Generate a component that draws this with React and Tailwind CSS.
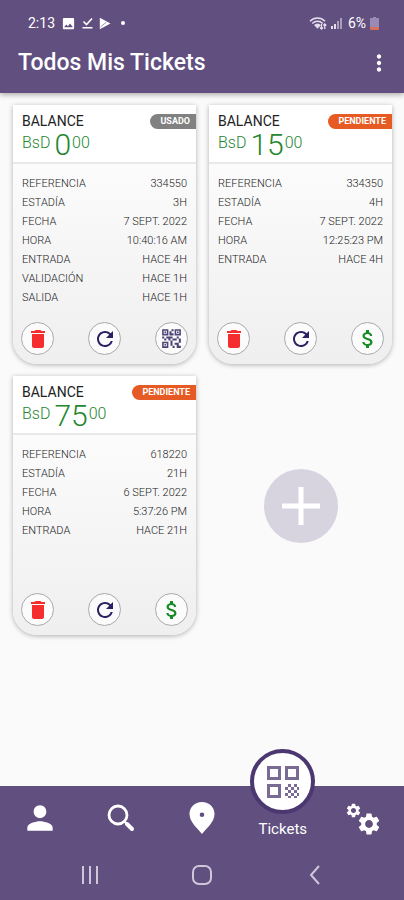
import {
  MdAttachMoney,
  MdDelete,
  MdImage,
  MdMoreVert,
  MdPerson,
  MdQrCode2,
  MdRefresh,
  MdSettings,
} from "react-icons/md";

const tickets = [
  {
    id: "334550",
    amount: "0",
    status: "USADO",
    rows: [
      ["REFERENCIA", "334550"],
      ["ESTADÍA", "3H"],
      ["FECHA", "7 SEPT. 2022"],
      ["HORA", "10:40:16 AM"],
      ["ENTRADA", "HACE 4H"],
      ["VALIDACIÓN", "HACE 1H"],
      ["SALIDA", "HACE 1H"],
    ],
  },
  {
    id: "334350",
    amount: "15",
    status: "PENDIENTE",
    rows: [
      ["REFERENCIA", "334350"],
      ["ESTADÍA", "4H"],
      ["FECHA", "7 SEPT. 2022"],
      ["HORA", "12:25:23 PM"],
      ["ENTRADA", "HACE 4H"],
    ],
  },
  {
    id: "618220",
    amount: "75",
    status: "PENDIENTE",
    rows: [
      ["REFERENCIA", "618220"],
      ["ESTADÍA", "21H"],
      ["FECHA", "6 SEPT. 2022"],
      ["HORA", "5:37:26 PM"],
      ["ENTRADA", "HACE 21H"],
    ],
  },
];

function StatusBar() {
  return (
    <div className="flex h-6 items-center justify-between pl-7 pr-[25px] text-sm">
      <div className="flex items-center gap-1.5">
        <span>2:13</span>
        <MdImage size={15} />
        <svg viewBox="0 0 11 12" width="11" height="12" fill="none" stroke="currentColor" strokeWidth="1.6">
          <path d="M1.5 4.5 4.5 7.5 10 1.5M.5 10.8h10" />
        </svg>
        <svg viewBox="0 0 12 13" width="12" height="13">
          <path fill="currentColor" d="M.8.8v11.4L11.5 6.5z" />
          <path fill="none" stroke="#614f7f" strokeWidth=".6" d="m1.5 10 6-5" />
        </svg>
        <span className="ml-1 h-1 w-1 rounded-full bg-white" />
      </div>
      <div className="flex items-center gap-1">
        <svg viewBox="0 0 18 14" width="18" height="14" fill="none" stroke="#e4deec">
          <path strokeWidth="1.5" d="M1 5.2c4.3-4.3 10.7-4.3 15 0M3.3 7.5c3-3 7.4-3 10.4 0" />
          <path fill="#e4deec" stroke="none" d="M5 9c2.2-2 4.8-2 7 0l-3.5 3.8z" />
          <path strokeWidth="1.3" d="M12.5 8v5m-1.5-1.5 1.5 1.5 1.5-1.5M15.8 13V8m-1.5 1.5L15.8 8l1.5 1.5" />
        </svg>
        <svg viewBox="0 0 11 12" width="11" height="12">
          <path fill="#e4deec" d="M0 9h2v3H0zM3 7h2v5H3z" />
          <path fill="#a99dba" d="M6 4h2v8H6zM9 1h2v11H9z" />
        </svg>
        <span className="ml-0.5">6%</span>
        <svg viewBox="0 0 9 13" width="9" height="13">
          <path fill="#988bb5" d="M3 0h3v1h3v9H0V1h3z" />
          <path fill="#d9705c" d="M0 10h9v2a1 1 0 0 1-1 1H1a1 1 0 0 1-1-1z" />
        </svg>
      </div>
    </div>
  );
}

function RoundButton({ label, children, color }) {
  return (
    <button
      aria-label={label}
      className={`flex h-[33px] w-[33px] items-center justify-center rounded-full border border-[#a9a9ad] bg-[#fbfbfb] ${color}`}
    >
      {children}
    </button>
  );
}

function TicketCard({ ticket }) {
  const used = ticket.status === "USADO";
  return (
    <article className="flex min-h-[259px] flex-col rounded-b-3xl bg-linear-to-b from-white to-[#efeff0] shadow-[0_1px_5px_rgba(0,0,0,0.3)]">
      <div className="h-[59px] border-b-2 border-[#e9e9e9] bg-white pl-[9px] pt-2">
        <div className="flex items-center justify-between">
          <h2 className="text-sm leading-4 text-[#222]">BALANCE</h2>
          <span
            className={`rounded-l-full pr-1.5 pl-2.5 text-[9px] leading-[15px] font-bold text-white ${
              used ? "bg-[#818181]" : "bg-[#e65a23]"
            }`}
          >
            {ticket.status}
          </span>
        </div>
        <p className="flex h-8 items-start font-light text-[#24862d]">
          <span className="mr-1 pt-1 text-base leading-5">BsD</span>
          <span className="text-3xl leading-8">{ticket.amount}</span>
          <span className="ml-px pt-1 text-base leading-5">00</span>
        </p>
      </div>
      <dl className="flex-1 px-[9px] pt-2.5 text-[11px] leading-[19px] font-light text-[#222]">
        {ticket.rows.map(([name, value]) => (
          <div key={name} className="flex justify-between">
            <dt>{name}</dt>
            <dd>{value}</dd>
          </div>
        ))}
      </dl>
      <div className="flex justify-between px-2 pb-[9px]">
        <RoundButton label="Eliminar" color="text-[#f52d2d]">
          <MdDelete size={24} />
        </RoundButton>
        <RoundButton label="Actualizar" color="text-[#2c1f62]">
          <MdRefresh size={24} />
        </RoundButton>
        {used ? (
          <RoundButton label="Ver código QR" color="text-[#4e4577]">
            <MdQrCode2 size={25} />
          </RoundButton>
        ) : (
          <RoundButton label="Pagar" color="text-[#168a24]">
            <MdAttachMoney size={24} />
          </RoundButton>
        )}
      </div>
    </article>
  );
}

function QrIcon() {
  return (
    <svg viewBox="0 0 32 32" width="32" height="32" fill="none">
      <path stroke="#796b93" strokeWidth="3" d="M1.5 1.5h11v11h-11zM19.5 1.5h11v11h-11zM1.5 19.5h11v11h-11z" />
      <path
        fill="#796b93"
        d="M21 18h3v3h-3zM27 18h3v3h-3zM18 21h3v3h-3zM24 21h3v3h-3zM21 24h3v3h-3zM27 24h3v3h-3zM18 27h3v3h-3zM24 27h3v3h-3zM30 21h2v3h-2zM30 27h2v3h-2zM21 30h3v2h-3zM27 30h3v2h-3z"
      />
    </svg>
  );
}

function NavBar() {
  return (
    <nav className="grid h-16 grid-cols-5 justify-items-center">
      <button aria-label="Perfil">
        <MdPerson size={38} />
      </button>
      <button aria-label="Buscar">
        <svg viewBox="0 0 28 28" width="28" height="28" fill="none" stroke="currentColor">
          <circle cx="11" cy="11" r="9" strokeWidth="2.8" />
          <path strokeWidth="2" d="m17 17 3 3" />
          <path strokeWidth="4" strokeLinecap="round" d="m20 20 5 5" />
        </svg>
      </button>
      <button aria-label="Mapa">
        <svg viewBox="0 0 26 32" width="26" height="32">
          <path
            fill="currentColor"
            fillRule="evenodd"
            d="M13 0C5.8 0 .5 5.200.5 12c0 8.500 8.500 14.500 12.500 20 4-5.500 12.500-11.500 12.500-20C25.500 5.200 20.200 0 13 0zm0 10.500a2.300 2.300 0 1 1 0 4.600 2.300 2.300 0 0 1 0-4.600z"
          />
        </svg>
      </button>
      <button aria-current="page" className="-mt-[37px] flex flex-col items-center">
        <span className="flex h-[65px] w-[65px] items-center justify-center rounded-full border-4 border-[#4b3870] bg-white">
          <QrIcon />
        </span>
        <span className="mt-1.5 text-[15px] leading-[18px]">Tickets</span>
      </button>
      <button aria-label="Ajustes" className="flex items-center">
        <MdSettings size={17} className="-mr-1.5 mb-4" />
        <MdSettings size={26} className="mt-3" />
      </button>
    </nav>
  );
}

export default function App() {
  return (
    <div className="flex min-h-screen flex-col bg-[#fafafa] font-['Roboto',sans-serif]">
      <header className="bg-[#614f7f] pt-[11px] pb-3 text-white shadow-[0_2px_5px_rgba(0,0,0,0.3)]">
        <StatusBar />
        <div className="mt-2.5 flex h-9 items-center justify-between pl-[18px] pr-3">
          <h1 className="text-[23px] font-medium">Todos Mis Tickets</h1>
          <button aria-label="Más opciones">
            <MdMoreVert size={26} />
          </button>
        </div>
      </header>

      <main className="grid flex-1 grid-cols-2 content-start gap-x-[13px] gap-y-3 pt-3 pr-3 pb-12 pl-[13px]">
        {tickets.map((t) => (
          <TicketCard key={t.id} ticket={t} />
        ))}
        <div className="flex items-center justify-center">
          <button
            aria-label="Agregar ticket"
            className="flex h-[74px] w-[74px] items-center justify-center rounded-full bg-[#d7d4e0] text-white"
          >
            <svg viewBox="0 0 38 38" width="38" height="38" fill="none">
              <path stroke="currentColor" strokeWidth="5" d="M19 0v38M0 19h38" />
            </svg>
          </button>
        </div>
      </main>

      <footer className="bg-[#614f7f] text-white">
        <NavBar />
        <div className="flex h-[50px] items-center justify-between px-[80px] text-[#cfc6dc]">
          <button aria-label="Recientes">
            <svg viewBox="0 0 20 20" width="20" height="20" stroke="currentColor" strokeWidth="2">
              <path d="M3 1v18M10 1v18M17 1v18" />
            </svg>
          </button>
          <button aria-label="Inicio">
            <svg viewBox="0 0 20 20" width="20" height="20" fill="none" stroke="currentColor" strokeWidth="2">
              <rect x="1" y="1" width="18" height="18" rx="6" />
            </svg>
          </button>
          <button aria-label="Atrás">
            <svg viewBox="0 0 20 20" width="20" height="20" fill="none" stroke="currentColor" strokeWidth="2">
              <path d="M15 1 7 10l8 9" />
            </svg>
          </button>
        </div>
      </footer>
    </div>
  );
}
